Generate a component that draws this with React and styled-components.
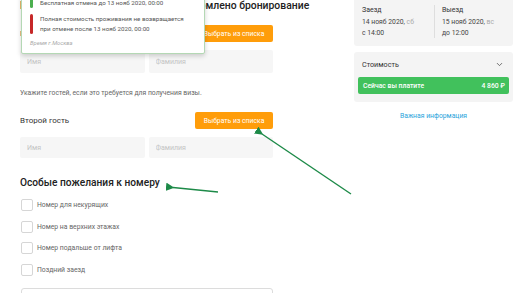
import React from 'react'
import styled, { createGlobalStyle } from 'styled-components'
import { ChevronDown } from 'lucide-react'

const GlobalStyle = createGlobalStyle`
  body {
    margin: 0;
    background: #fff;
    font-family: Roboto, "Noto Sans", sans-serif;
    overflow: hidden;
  }
`

const guests = [
  { id: 1, label: 'Первый гость' },
  { id: 2, label: 'Второй гость' },
]

const wishes = [
  'Номер для некурящих',
  'Номер на верхних этажах',
  'Номер подальше от лифта',
  'Поздний заезд',
]

const App = () => {
  return (
    <Page>
      <GlobalStyle />
      <LeftColumn>
        <Title>Имена гостей, на которых будет оформлено бронирование</Title>

        <GuestRow>
          <GuestLabel>{guests[0].label}</GuestLabel>
          <PickButton>Выбрать из списка</PickButton>
        </GuestRow>
        <InputsRow>
          <Field placeholder="Имя" />
          <Field placeholder="Фамилия" />
        </InputsRow>

        <Hint>Укажите гостей, если это требуется для получения визы.</Hint>

        <GuestRow second>
          <GuestLabel>{guests[1].label}</GuestLabel>
          <PickButton>Выбрать из списка</PickButton>
        </GuestRow>
        <InputsRow short>
          <Field placeholder="Имя" />
          <Field placeholder="Фамилия" />
        </InputsRow>

        <SectionTitle>Особые пожелания к номеру</SectionTitle>
        <WishList>
          {wishes.map(w => (
            <WishRow key={w}>
              <Box />
              <WishLabel>{w}</WishLabel>
            </WishRow>
          ))}
        </WishList>
        <Comment />
      </LeftColumn>

      <RightColumn>
        <DatesCard>
          <DateCol>
            <DateLabel>Заезд</DateLabel>
            <DateText>14 нояб 2020, <Muted>сб</Muted></DateText>
            <DateText>с 14:00</DateText>
          </DateCol>
          <DateCol divided>
            <DateLabel>Выезд</DateLabel>
            <DateText>15 нояб 2020, <Muted>вс</Muted></DateText>
            <DateText>до 12:00</DateText>
          </DateCol>
        </DatesCard>

        <CostCard>
          <CostHeader>
            <span>Стоимость</span>
            <ChevronDown size={9} strokeWidth={2.2} color="#555" />
          </CostHeader>
          <PayBar>
            <span>Сейчас вы платите</span>
            <span>4 860 ₽</span>
          </PayBar>
        </CostCard>

        <InfoLink>Важная информация</InfoLink>
      </RightColumn>

      <Popup>
        <PolicyItem>
          <PolicyBar color="#4caf50" />
          <PolicyText>Бесплатная отмена до 13 нояб 2020, 00:00</PolicyText>
        </PolicyItem>
        <PolicyItem>
          <PolicyBar color="#c62828" />
          <PolicyText>
            Полная стоимость проживания не возвращается<br />
            при отмене после 13 нояб 2020, 00:00
          </PolicyText>
        </PolicyItem>
        <TimeZone>Время г.Москва</TimeZone>
      </Popup>

      <Arrows viewBox="0 0 520 293">
        <defs>
          <marker id="head" markerWidth="6" markerHeight="6" refX="1" refY="3" orient="auto">
            <path d="M0,0 L6,3 L0,6 Z" fill="#1d8a48" transform="rotate(180 3 3)" />
          </marker>
        </defs>
        <line x1="351" y1="194" x2="262" y2="134" stroke="#1d8a48" strokeWidth="1.4" markerEnd="url(#head)" />
        <line x1="218" y1="192" x2="173" y2="187.5" stroke="#1d8a48" strokeWidth="1.4" markerEnd="url(#head)" />
      </Arrows>
    </Page>
  )
}

export default App

const Page = styled.div`
  position: relative;
  display: flex;
  height: 293px;
  padding-left: 20px;
  overflow: hidden;
  box-sizing: border-box;
`

const LeftColumn = styled.div`
  display: flex;
  flex-direction: column;
  width: 253px;
  flex-shrink: 0;
  & > * {
    flex-shrink: 0;
  }
`

const Title = styled.h2`
  margin: 0;
  font-size: 10.4px;
  line-height: 12px;
  font-weight: 500;
  color: #222;
  white-space: nowrap;
`

const GuestRow = styled.div`
  display: flex;
  justify-content: space-between;
  align-items: center;
  height: 17px;
  margin-top: ${props => (props.second ? '14px' : '13px')};
`

const GuestLabel = styled.span`
  font-size: 8px;
  color: #333;
`

const PickButton = styled.button`
  width: 78px;
  height: 17px;
  padding: 0;
  border: none;
  border-radius: 2px;
  background: #ff9d0a;
  color: #fff;
  font-family: Roboto, sans-serif;
  font-size: 6.8px;
`

const InputsRow = styled.div`
  display: grid;
  grid-template-columns: 1fr 1fr;
  gap: 4px;
  margin-top: 8px;
  height: ${props => (props.short ? '21px' : '23px')};
`

const Field = styled.input`
  min-width: 0;
  height: 100%;
  box-sizing: border-box;
  border: none;
  border-radius: 2px;
  background: #f6f6f6;
  padding: 0 0 0 7px;
  font-family: Roboto, sans-serif;
  font-size: 7px;
  &::placeholder {
    color: #c4c4c4;
  }
`

const Hint = styled.div`
  margin-top: 16px;
  font-size: 6.8px;
  line-height: 9px;
  color: #666;
  white-space: nowrap;
`

const SectionTitle = styled.h3`
  margin: 18px 0 0;
  font-size: 10.2px;
  line-height: 13px;
  font-weight: 500;
  color: #222;
`

const WishList = styled.div`
  display: flex;
  flex-direction: column;
  gap: 9.6px;
  margin-top: 10px;
`

const WishRow = styled.label`
  display: flex;
  align-items: center;
  gap: 4px;
  height: 12px;
`

const Box = styled.span`
  width: 10px;
  height: 10px;
  border: 1px solid #d6d6d6;
  border-radius: 2px;
  margin-left: 1px;
  background: #fff;
`

const WishLabel = styled.span`
  font-size: 6.8px;
  color: #666;
`

const Comment = styled.div`
  margin-top: 12px;
  margin-left: 1px;
  height: 40px;
  border: 1px solid #dcdcdc;
  border-radius: 3px;
`

const RightColumn = styled.div`
  display: flex;
  flex-direction: column;
  width: 159px;
  margin-left: 81px;
  & > * {
    flex-shrink: 0;
  }
`

const DatesCard = styled.div`
  display: grid;
  grid-template-columns: 80px 1fr;
  height: 46px;
  background: #f4f4f4;
  border-radius: 0 0 3px 3px;
  box-sizing: border-box;
  padding-top: 4.5px;
`

const DateCol = styled.div`
  padding-left: ${props => (props.divided ? '7px' : '8px')};
  border-left: ${props => (props.divided ? '1px solid #dedede' : 'none')};
  height: 33px;
`

const DateLabel = styled.div`
  font-size: 7px;
  line-height: 11px;
  color: #333;
  margin-bottom: 1px;
`

const DateText = styled.div`
  font-size: 6.8px;
  line-height: 11px;
  color: #444;
`

const Muted = styled.span`
  color: #aaa;
`

const CostCard = styled.div`
  margin-top: 6px;
  background: #f4f4f4;
  border-radius: 3px;
  padding-bottom: 8px;
`

const CostHeader = styled.div`
  display: flex;
  justify-content: space-between;
  align-items: center;
  height: 25px;
  padding: 0 9px 0 8px;
  font-size: 7.2px;
  color: #333;
`

const PayBar = styled.div`
  display: flex;
  justify-content: space-between;
  align-items: center;
  height: 17px;
  margin: 0 4px;
  padding: 0 4px 0 5px;
  border-radius: 2px;
  background: #41c15c;
  color: #fff;
  font-size: 6.8px;
  font-weight: 500;
`

const InfoLink = styled.a`
  margin-top: 10px;
  text-align: center;
  font-size: 6.8px;
  line-height: 9px;
  color: #2ba4db;
`

const Popup = styled.div`
  position: absolute;
  left: 21px;
  top: -16px;
  width: 184px;
  height: 70px;
  box-sizing: border-box;
  padding: 13px 8px 0;
  background: #fff;
  border: 1px solid #b4d8b4;
  border-radius: 2px;
  box-shadow: 0 2px 5px rgba(0, 0, 0, 0.18);
  display: flex;
  flex-direction: column;
  gap: 6px;
`

const PolicyItem = styled.div`
  display: flex;
  gap: 7px;
`

const PolicyBar = styled.span`
  width: 3px;
  border-radius: 2px;
  background: ${props => props.color};
  flex-shrink: 0;
`

const PolicyText = styled.div`
  font-size: 6.2px;
  line-height: 10px;
  color: #555;
  white-space: nowrap;
`

const TimeZone = styled.div`
  margin-top: -1px;
  font-size: 5.8px;
  line-height: 9px;
  font-style: italic;
  color: #aaa;
`

const Arrows = styled.svg`
  position: absolute;
  left: 0;
  top: 0;
  width: 520px;
  height: 293px;
  pointer-events: none;
`
